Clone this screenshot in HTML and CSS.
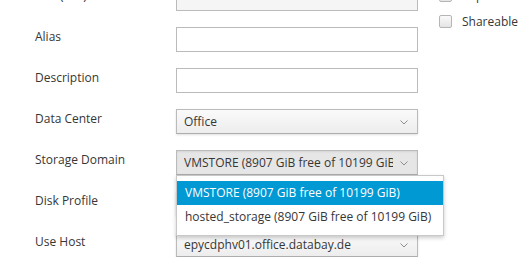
FILE: index.html
```html
<!DOCTYPE html>
<html lang="en">
<head>
    <meta charset="UTF-8">
    <title>New Virtual Disk</title>
    <link rel="stylesheet" href="styles.css">
</head>
<body>
    <div class="dialog">
        <div class="fields">
            <div class="row">
                <label>Size (GiB)</label>
                <div class="input disabled"></div>
            </div>
            <div class="row">
                <label>Alias</label>
                <div class="input"></div>
            </div>
            <div class="row">
                <label>Description</label>
                <div class="input"></div>
            </div>
            <div class="row">
                <label>Data Center</label>
                <div class="select">
                    <span class="value">Office</span>
                    <svg class="caret" width="8" height="5" viewBox="0 0 8 5"><polyline points="0.5,0.5 4,4 7.5,0.5" fill="none" stroke="#8b8d8f" stroke-width="1"/></svg>
                </div>
            </div>
            <div class="row">
                <label>Storage Domain</label>
                <div class="select open">
                    <span class="value">VMSTORE (8907 GiB free of 10199 GiB)</span>
                    <svg class="caret" width="8" height="5" viewBox="0 0 8 5"><polyline points="0.5,0.5 4,4 7.5,0.5" fill="none" stroke="#8b8d8f" stroke-width="1"/></svg>
                    <ul class="menu">
                        <li class="active">VMSTORE (8907 GiB free of 10199 GiB)</li>
                        <li>hosted_storage (8907 GiB free of 10199 GiB)</li>
                    </ul>
                </div>
            </div>
            <div class="row">
                <label>Disk Profile</label>
                <div class="select">
                    <span class="value"></span>
                </div>
            </div>
            <div class="row">
                <label>Use Host</label>
                <div class="select">
                    <span class="value">epycdphv01.office.databay.de</span>
                    <svg class="caret" width="8" height="5" viewBox="0 0 8 5"><polyline points="0.5,0.5 4,4 7.5,0.5" fill="none" stroke="#8b8d8f" stroke-width="1"/></svg>
                </div>
            </div>
        </div>
        <div class="options">
            <div class="check"><span class="box"></span>Wipe After Delete</div>
            <div class="check"><span class="box"></span>Shareable</div>
        </div>
    </div>
</body>
</html>
```

FILE: styles.css
```css
body {
    margin: 0;
    font-family: "Open Sans", "Noto Sans", sans-serif;
    font-size: 12px;
    color: #363636;
    background-color: white;
    overflow: hidden;
}
.dialog {
    display: flex;
    margin-top: -14px;
}
.fields {
    display: flex;
    flex-direction: column;
    gap: 16px;
}
.row {
    display: flex;
    align-items: flex-start;
}
.row label {
    width: 141px;
    padding-left: 35px;
    padding-top: 1px;
    line-height: 18px;
}
.input {
    width: 240px;
    height: 23px;
    border: 1px solid #bbb;
    background-color: white;
}
.input.disabled {
    background-color: #f5f5f5;
}
.select {
    position: relative;
    width: 240px;
    height: 23px;
    border: 1px solid #bbb;
    border-bottom-color: #adadad;
    background-image: linear-gradient(to bottom, #fafafa 0, #ededed 100%);
    box-shadow: 0 1px 2px rgba(3, 3, 3, 0.12);
    display: flex;
    align-items: center;
}
.select.open {
    background-image: none;
    background-color: #e6e6e6;
    box-shadow: inset 0 1px 2px rgba(3, 3, 3, 0.08);
}
.select .value {
    flex: 1;
    margin-left: 7px;
    margin-right: 24px;
    white-space: nowrap;
    overflow: hidden;
}
.caret {
    position: absolute;
    right: 9px;
    top: 10px;
}
.menu {
    position: absolute;
    left: -1px;
    top: 24px;
    width: 266px;
    margin: 0;
    padding: 5px 0 6px;
    list-style: none;
    background-color: white;
    border: 1px solid #c8c8c8;
    box-shadow: 0 2px 4px rgba(3, 3, 3, 0.2);
    z-index: 2;
}
.menu li {
    height: 24px;
    line-height: 24px;
    padding-left: 8px;
    white-space: nowrap;
    color: #363636;
}
.menu li.active {
    background-color: #0099d3;
    color: white;
}
.options {
    margin-left: 21px;
    padding-top: 1px;
    display: flex;
    flex-direction: column;
    gap: 9px;
    min-width: 0;
    overflow: hidden;
}
.check {
    display: flex;
    align-items: center;
    gap: 10px;
    height: 17px;
    line-height: 17px;
    white-space: nowrap;
}
.box {
    flex-shrink: 0;
    width: 11px;
    height: 11px;
    border: 1px solid #b5b5b5;
    border-radius: 2px;
    background-image: linear-gradient(to bottom, #fafafa, #e4e4e4);
}
```
